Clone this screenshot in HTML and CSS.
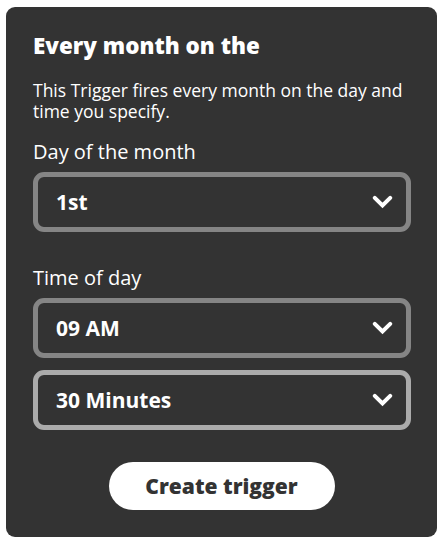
FILE: index.html
```html
<!DOCTYPE html>
<html>
<head>
<meta charset="utf-8">
<link rel="stylesheet" href="styles.css">
</head>
<body>
<div class="card">
  <h1 class="title">Every month on the</h1>
  <p class="desc">This Trigger fires every month on the day and time you specify.</p>
  <div class="field">
    <div class="label">Day of the month</div>
    <div class="select"><span>1st</span><svg class="chev" viewBox="0 0 21 14" width="21" height="14"><path d="M2.8 2.8 L10.5 10.5 L18.2 2.8" fill="none" stroke="#fff" stroke-width="4" stroke-linecap="round" stroke-linejoin="miter"/></svg></div>
  </div>
  <div class="field field-time">
    <div class="label">Time of day</div>
    <div class="select"><span>09 AM</span><svg class="chev" viewBox="0 0 21 14" width="21" height="14"><path d="M2.8 2.8 L10.5 10.5 L18.2 2.8" fill="none" stroke="#fff" stroke-width="4" stroke-linecap="round" stroke-linejoin="miter"/></svg></div>
    <div class="select select-focus"><span>30 Minutes</span><svg class="chev" viewBox="0 0 21 14" width="21" height="14"><path d="M2.8 2.8 L10.5 10.5 L18.2 2.8" fill="none" stroke="#fff" stroke-width="4" stroke-linecap="round" stroke-linejoin="miter"/></svg></div>
  </div>
  <div class="actions">
    <button class="btn">Create trigger</button>
  </div>
</div>
</body>
</html>
```
FILE: styles.css
```css
html, body {
  margin: 0;
  padding: 0;
  background: #fff;
}
body {
  padding: 7px 5px 10px 6px;
  font-family: "Open Sans", "Noto Sans", sans-serif;
  color: #fff;
}
.card {
  background: #333333;
  border-radius: 9px;
  padding: 23px 26px 0 27px;
  height: 530px;
  box-sizing: border-box;
}
.title {
  margin: 0;
  font-size: 22.4px;
  font-weight: 800;
  line-height: 32px;
}
.desc {
  margin: 18px 0 0 0;
  font-size: 17.5px;
  line-height: 21px;
}
.field {
  margin-top: 18px;
  display: flex;
  flex-direction: column;
  gap: 12px;
}
.field-time {
  margin-top: 34px;
}
.label {
  font-size: 20px;
  line-height: 24px;
  margin-bottom: -4px;
}
.select {
  display: flex;
  align-items: center;
  justify-content: space-between;
  height: 60px;
  box-sizing: border-box;
  border: 5px solid #858585;
  border-radius: 11px;
  padding: 0 13px 0 18px;
  font-size: 21px;
  font-weight: 700;
}
.select-focus {
  border-color: #ababab;
}
.chev {
  display: block;
}
.actions {
  display: flex;
  justify-content: center;
  margin-top: 32px;
  padding-right: 1px;
}
.btn {
  background: #fff;
  color: #333;
  border: none;
  border-radius: 24px;
  height: 48px;
  width: 226px;
  font-family: "Open Sans", "Noto Sans", sans-serif;
  font-weight: 800;
  font-size: 21px;
  padding: 0;
}
```
